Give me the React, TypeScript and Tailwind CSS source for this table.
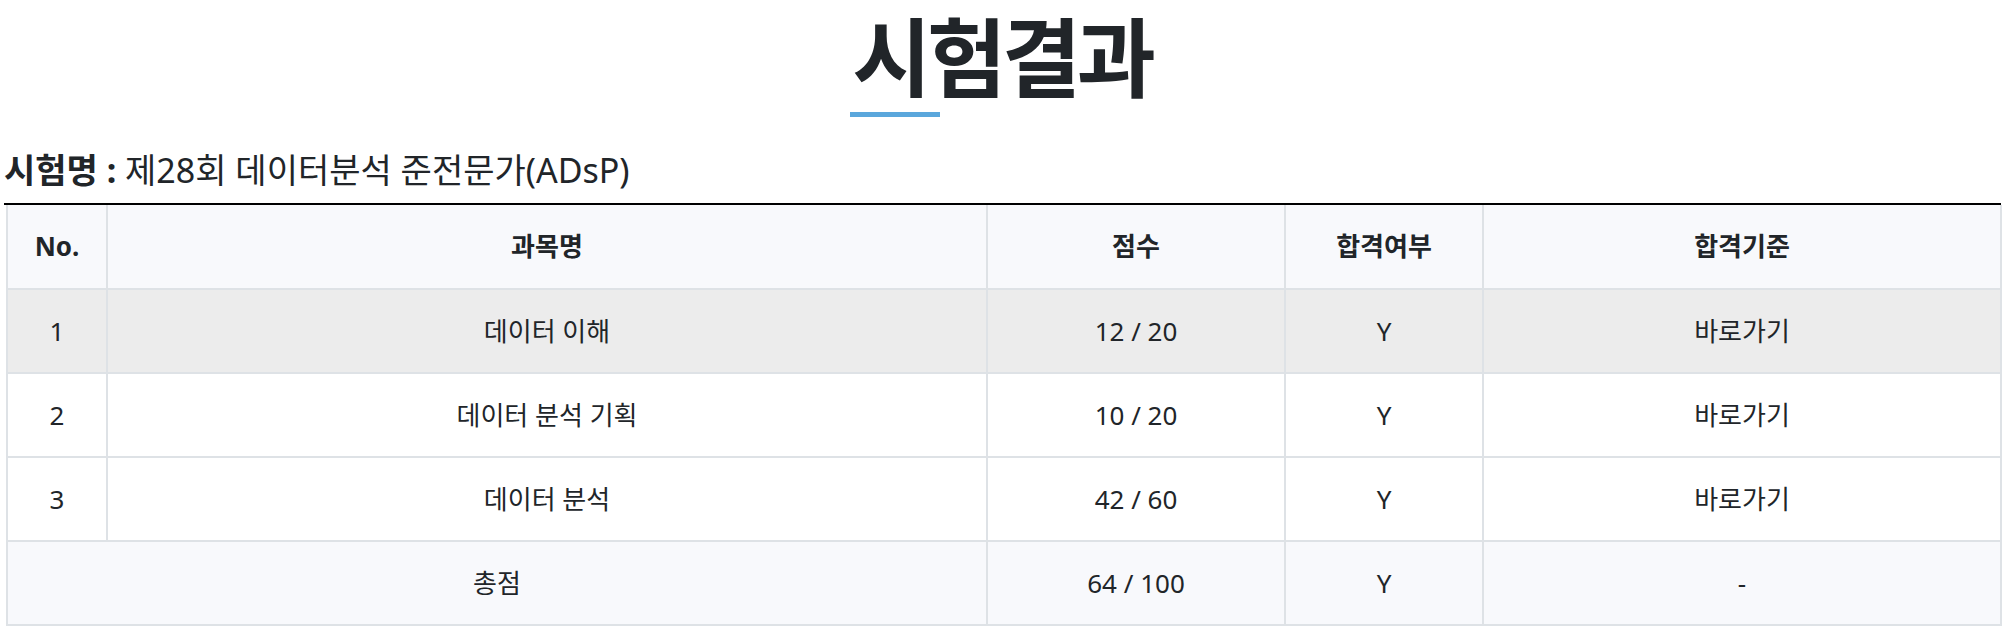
import React from "react";

interface SubjectRow {
  no: number;
  name: string;
  score: string;
  pass: string;
  link: string;
}

const rows: SubjectRow[] = [
  { no: 1, name: "데이터 이해", score: "12 / 20", pass: "Y", link: "바로가기" },
  { no: 2, name: "데이터 분석 기획", score: "10 / 20", pass: "Y", link: "바로가기" },
  { no: 3, name: "데이터 분석", score: "42 / 60", pass: "Y", link: "바로가기" },
];

const cell = "flex items-center justify-center border-r-2 border-b-2 border-[#dee2e6]";

const App: React.FC = () => {
  return (
    <div className="min-h-[634px] w-full bg-white font-['Noto_Sans','Noto_Sans_CJK_KR',sans-serif] text-[#212529]">
      <div className="flex justify-center pt-[11px]">
        <div className="flex flex-col items-start">
          <h1 className="pl-[2px] pr-[8px] font-['Liberation_Sans','Noto_Sans_CJK_KR',sans-serif] text-[86px] font-bold leading-[100px] tracking-[-0.05em]">
            시험결과
          </h1>
          <div className="mt-[1px] h-[5px] w-[90px] bg-[#5aa7dc]" />
        </div>
      </div>

      <p className="mt-[33px] pl-[4px] text-[34px] leading-[40px]">
        <span className="font-bold">시험명 :</span> 제28회 데이터분석 준전문가(ADsP)
      </p>

      <div className="mt-[13px] ml-[4px] w-[1997px] border-t-2 border-black">
        <div className="ml-[2px] grid w-[1994px] grid-cols-[100px_880px_298px_198px_518px] border-l-2 border-[#dee2e6] text-[26px]">
          {/* header */}
          <div className={`${cell} h-[85px] bg-[#f8f9fc] font-bold`}>No.</div>
          <div className={`${cell} h-[85px] bg-[#f8f9fc] font-bold`}>과목명</div>
          <div className={`${cell} h-[85px] bg-[#f8f9fc] font-bold`}>점수</div>
          <div className={`${cell} h-[85px] bg-[#f8f9fc] font-bold`}>합격여부</div>
          <div className={`${cell} h-[85px] bg-[#f8f9fc] font-bold`}>합격기준</div>

          {rows.map((row, index) => (
            <React.Fragment key={row.no}>
              <div className={`${cell} h-[84px] ${index === 0 ? "bg-[#ececec]" : "bg-white"}`}>{row.no}</div>
              <div className={`${cell} h-[84px] ${index === 0 ? "bg-[#ececec]" : "bg-white"}`}>{row.name}</div>
              <div className={`${cell} h-[84px] ${index === 0 ? "bg-[#ececec]" : "bg-white"}`}>{row.score}</div>
              <div className={`${cell} h-[84px] ${index === 0 ? "bg-[#ececec]" : "bg-white"}`}>{row.pass}</div>
              <div className={`${cell} h-[84px] ${index === 0 ? "bg-[#ececec]" : "bg-white"}`}>{row.link}</div>
            </React.Fragment>
          ))}

          {/* total */}
          <div className={`${cell} col-span-2 h-[84px] bg-[#f8f9fc]`}>총점</div>
          <div className={`${cell} h-[84px] bg-[#f8f9fc]`}>64 / 100</div>
          <div className={`${cell} h-[84px] bg-[#f8f9fc]`}>Y</div>
          <div className={`${cell} h-[84px] bg-[#f8f9fc]`}>-</div>
        </div>
      </div>
    </div>
  );
};

export default App;
